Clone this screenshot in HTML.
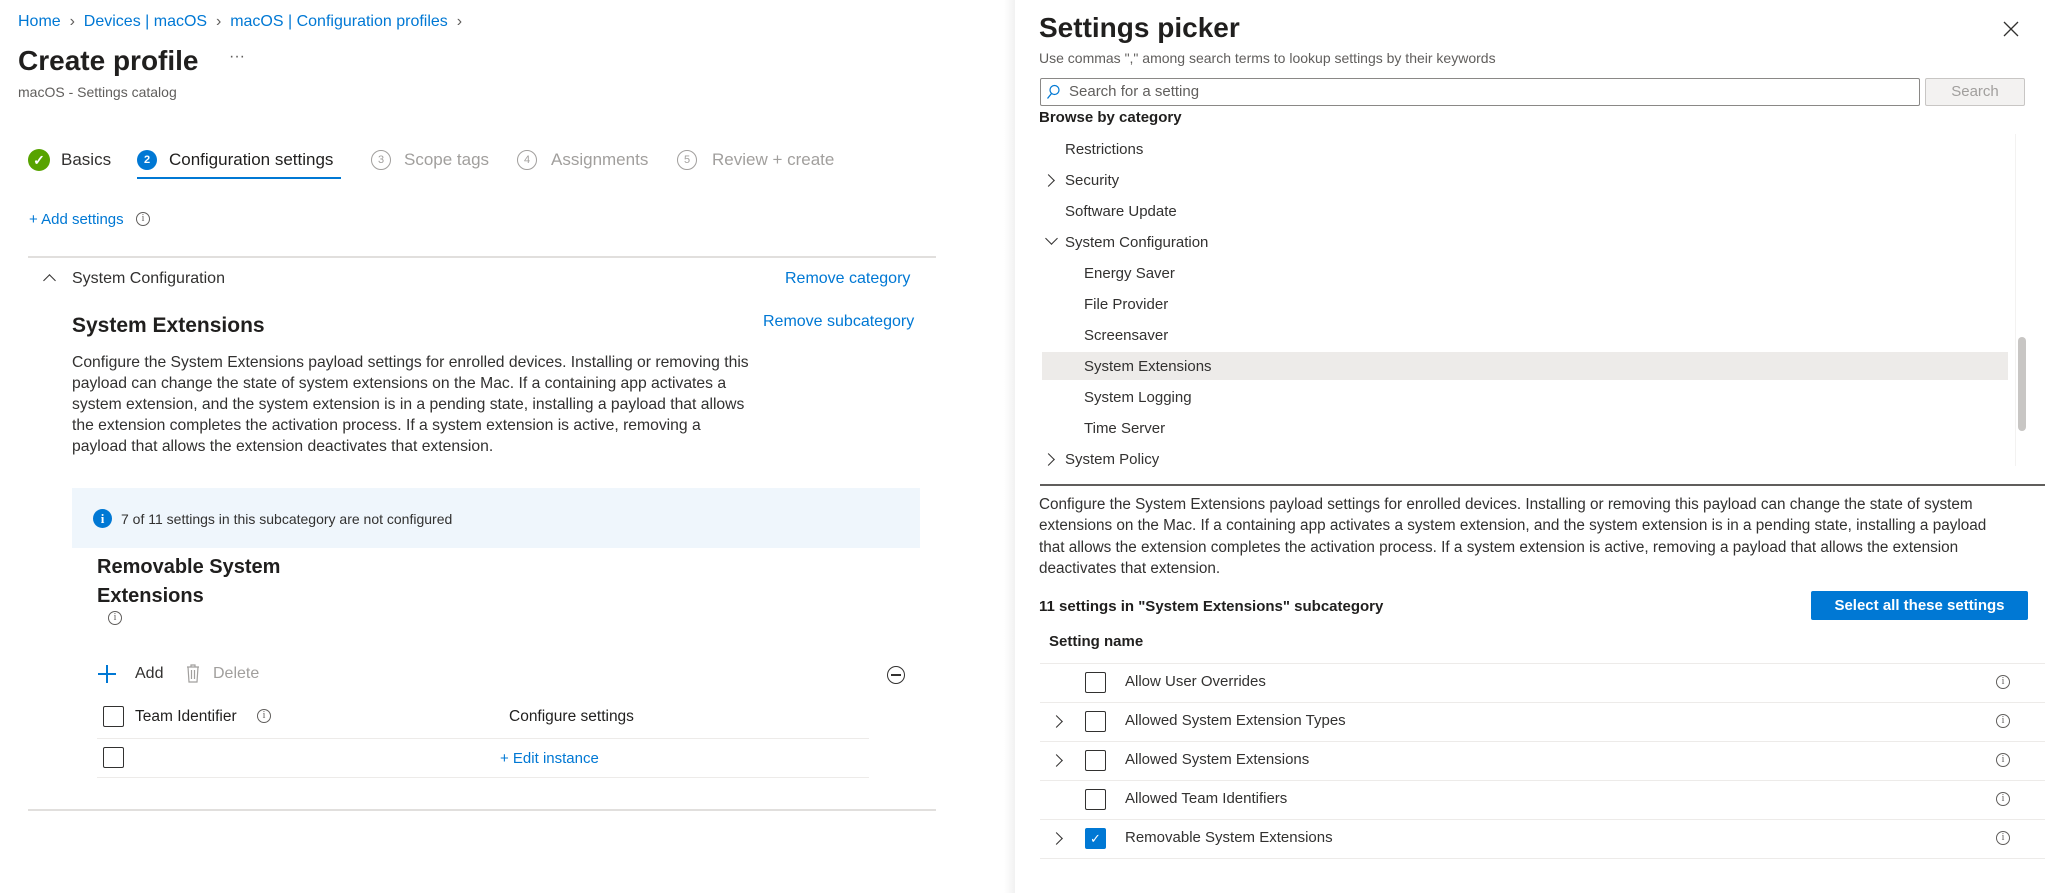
<!DOCTYPE html>
<html><head><meta charset="utf-8"><style>
*{margin:0;padding:0;box-sizing:border-box}
body{width:2048px;height:893px;background:#fff;font-family:"Liberation Sans",sans-serif;color:#323130;position:relative;overflow:hidden}
.a{position:absolute;white-space:nowrap}
.blue{color:#0078d4}
.gray{color:#a19f9d}
.cb{position:absolute;width:21px;height:21px;border:1.5px solid #323130;border-radius:2px;background:#fff}
.info{position:absolute;width:14px;height:14px;border:1px solid #605e5c;border-radius:50%;font-size:10px;line-height:12px;text-align:center;color:#605e5c;font-family:"Liberation Serif",serif}
.num{position:absolute;width:20px;height:20px;border:1px solid #a19f9d;border-radius:50%;font-size:11px;line-height:18px;text-align:center;color:#a19f9d}
.hl{position:absolute;height:1px;background:#edebe9}
.chev{position:absolute;width:9px;height:9px;border-right:1.3px solid #323130;border-top:1.3px solid #323130;transform:rotate(45deg)}
</style></head><body>

<!-- Left -->
<div class="a" style="left:18px;top:13px;font-size:16px"><span class="blue">Home</span><span style="color:#605e5c">&nbsp;&nbsp;›&nbsp;&nbsp;</span><span class="blue">Devices | macOS</span><span style="color:#605e5c">&nbsp;&nbsp;›&nbsp;&nbsp;</span><span class="blue">macOS | Configuration profiles</span><span style="color:#605e5c">&nbsp;&nbsp;›</span></div>
<div class="a" style="left:18px;top:45px;font-size:28px;font-weight:bold;color:#201f1e">Create profile</div>
<div class="a" style="left:229px;top:48px;font-size:16px;color:#605e5c">···</div>
<div class="a" style="left:18px;top:84px;font-size:14px;color:#605e5c">macOS - Settings catalog</div>

<div class="a" style="left:28px;top:149px;width:22px;height:22px;border-radius:50%;background:#57a300;color:#fff;font-size:14px;text-align:center;line-height:22px;font-weight:bold">✓</div>
<div class="a" style="left:61px;top:150px;font-size:17px">Basics</div>
<div class="a" style="left:137px;top:150px;width:20px;height:20px;border-radius:50%;background:#0078d4;color:#fff;font-size:11px;text-align:center;line-height:20px;font-weight:bold">2</div>
<div class="a" style="left:169px;top:150px;font-size:17px;color:#201f1e">Configuration settings</div>
<div class="a" style="left:137px;top:177px;width:204px;height:2px;background:#0078d4"></div>
<div class="num" style="left:371px;top:150px">3</div>
<div class="a gray" style="left:404px;top:150px;font-size:17px">Scope tags</div>
<div class="num" style="left:517px;top:150px">4</div>
<div class="a gray" style="left:551px;top:150px;font-size:17px">Assignments</div>
<div class="num" style="left:677px;top:150px">5</div>
<div class="a gray" style="left:712px;top:150px;font-size:17px">Review + create</div>

<div class="a blue" style="left:29px;top:211px;font-size:15px">+ Add settings</div>
<div class="info" style="left:136px;top:212px">i</div>

<div class="a" style="left:28px;top:256px;width:908px;height:2px;background:#e1dfdd"></div>
<div class="a" style="left:45px;top:276px;width:9px;height:9px;border-left:1.3px solid #323130;border-top:1.3px solid #323130;transform:rotate(45deg)"></div>
<div class="a" style="left:72px;top:270px;font-size:16px">System Configuration</div>
<div class="a blue" style="left:785px;top:270px;font-size:16px">Remove category</div>
<div class="a" style="left:72px;top:314px;font-size:21px;font-weight:bold;color:#201f1e">System Extensions</div>
<div class="a blue" style="left:763px;top:313px;font-size:16px">Remove subcategory</div>
<div class="a" style="left:72px;top:352px;font-size:15.7px;line-height:21px">Configure the System Extensions payload settings for enrolled devices. Installing or removing this<br>payload can change the state of system extensions on the Mac. If a containing app activates a<br>system extension, and the system extension is in a pending state, installing a payload that allows<br>the extension completes the activation process. If a system extension is active, removing a<br>payload that allows the extension deactivates that extension.</div>

<div class="a" style="left:72px;top:488px;width:848px;height:60px;background:#eff6fc"></div>
<div class="a" style="left:93px;top:509px;width:19px;height:19px;border-radius:50%;background:#0078d4;color:#fff;font-size:13px;font-weight:bold;text-align:center;line-height:19px;font-family:'Liberation Serif',serif">i</div>
<div class="a" style="left:121px;top:511px;font-size:14px">7 of 11 settings in this subcategory are not configured</div>

<div class="a" style="left:97px;top:553px;font-size:20px;font-weight:bold;line-height:29px;color:#201f1e">Removable System<br>Extensions</div>
<div class="info" style="left:108px;top:611px">i</div>

<div class="a" style="left:106px;top:665px;width:2px;height:18px;background:#0078d4"></div>
<div class="a" style="left:98px;top:673px;width:18px;height:2px;background:#0078d4"></div>
<div class="a" style="left:135px;top:665px;font-size:16px">Add</div>
<svg class="a" style="left:185px;top:663px" width="16" height="20" viewBox="0 0 16 20"><path d="M2 4h12M6 4V2h4v2M3 4l1 15h8l1-15M6.5 7v9M9.5 7v9" fill="none" stroke="#a19f9d" stroke-width="1.2"/></svg>
<div class="a gray" style="left:213px;top:665px;font-size:16px">Delete</div>
<div class="a" style="left:887px;top:666px;width:18px;height:18px;border:1.3px solid #323130;border-radius:50%"></div>
<div class="a" style="left:891px;top:674px;width:10px;height:1.5px;background:#323130"></div>

<div class="cb" style="left:103px;top:706px"></div>
<div class="a" style="left:135px;top:708px;font-size:15.5px;color:#201f1e">Team Identifier</div>
<div class="info" style="left:257px;top:709px">i</div>
<div class="a" style="left:509px;top:708px;font-size:15.5px;color:#201f1e">Configure settings</div>
<div class="hl" style="left:97px;top:738px;width:772px"></div>
<div class="cb" style="left:103px;top:747px"></div>
<div class="a blue" style="left:500px;top:750px;font-size:15px">+ Edit instance</div>
<div class="hl" style="left:97px;top:777px;width:772px"></div>
<div class="a" style="left:28px;top:809px;width:908px;height:2px;background:#e1dfdd"></div>

<!-- Right panel -->
<div class="a" style="left:1004px;top:0;width:12px;height:893px;background:linear-gradient(to right,rgba(0,0,0,0),rgba(0,0,0,0.06))"></div>
<div class="a" style="left:1015px;top:0;width:1033px;height:893px;background:#fff"></div>
<div class="a" style="left:1039px;top:12px;font-size:28px;font-weight:bold;color:#201f1e">Settings picker</div>
<svg class="a" style="left:2003px;top:21px" width="16" height="16"><path d="M1 1L15 15M15 1L1 15" stroke="#323130" stroke-width="1.3"/></svg>
<div class="a" style="left:1039px;top:50px;font-size:14px;color:#605e5c">Use commas "," among search terms to lookup settings by their keywords</div>
<div class="a" style="left:1040px;top:78px;width:880px;height:28px;border:1px solid #8a8886;border-radius:2px"></div>
<svg class="a" style="left:1046px;top:84px" width="14" height="16"><circle cx="8.5" cy="6" r="4.5" fill="none" stroke="#0078d4" stroke-width="1.2"/><path d="M5.5 9.5L1.5 14.5" stroke="#0078d4" stroke-width="1.3"/></svg>
<div class="a" style="left:1069px;top:83px;font-size:15px;color:#605e5c">Search for a setting</div>
<div class="a" style="left:1925px;top:78px;width:100px;height:28px;border:1px solid #c8c6c4;background:#f3f2f1;border-radius:2px;font-size:15px;color:#a19f9d;text-align:center;line-height:26px">Search</div>
<div class="a" style="left:1039px;top:109px;font-size:15px;font-weight:bold;color:#201f1e">Browse by category</div>

<div class="a" style="left:1042px;top:352px;width:966px;height:28px;background:#edebe9"></div>
<div class="a" style="left:1065px;top:141px;font-size:15px">Restrictions</div>
<div class="chev" style="left:1044px;top:176px"></div>
<div class="a" style="left:1065px;top:172px;font-size:15px">Security</div>
<div class="a" style="left:1065px;top:203px;font-size:15px">Software Update</div>
<div class="a" style="left:1047px;top:234px;width:9px;height:9px;border-right:1.3px solid #323130;border-bottom:1.3px solid #323130;transform:rotate(45deg)"></div>
<div class="a" style="left:1065px;top:234px;font-size:15px">System Configuration</div>
<div class="a" style="left:1084px;top:265px;font-size:15px">Energy Saver</div>
<div class="a" style="left:1084px;top:296px;font-size:15px">File Provider</div>
<div class="a" style="left:1084px;top:327px;font-size:15px">Screensaver</div>
<div class="a" style="left:1084px;top:358px;font-size:15px">System Extensions</div>
<div class="a" style="left:1084px;top:389px;font-size:15px">System Logging</div>
<div class="a" style="left:1084px;top:420px;font-size:15px">Time Server</div>
<div class="chev" style="left:1044px;top:455px"></div>
<div class="a" style="left:1065px;top:451px;font-size:15px;height:16px;overflow:hidden">System Policy</div>
<div class="a" style="left:2015px;top:134px;width:1px;height:332px;background:#f3f2f1"></div>
<div class="a" style="left:2018px;top:337px;width:8px;height:94px;border-radius:4px;background:#c8c6c4"></div>

<div class="a" style="left:1040px;top:484px;width:1005px;height:2px;background:#605e5c"></div>
<div class="a" style="left:1039px;top:494px;font-size:15.3px;line-height:21.3px">Configure the System Extensions payload settings for enrolled devices. Installing or removing this payload can change the state of system<br>extensions on the Mac. If a containing app activates a system extension, and the system extension is in a pending state, installing a payload<br>that allows the extension completes the activation process. If a system extension is active, removing a payload that allows the extension<br>deactivates that extension.</div>
<div class="a" style="left:1039px;top:598px;font-size:15px;font-weight:bold;color:#201f1e">11 settings in "System Extensions" subcategory</div>
<div class="a" style="left:1811px;top:591px;width:217px;height:29px;background:#0078d4;color:#fff;font-size:15px;font-weight:bold;text-align:center;line-height:29px;border-radius:2px">Select all these settings</div>
<div class="a" style="left:1049px;top:633px;font-size:15px;font-weight:bold;color:#201f1e">Setting name</div>
<div class="hl" style="left:1040px;top:663px;width:1005px"></div>

<div class="cb" style="left:1085px;top:672px"></div>
<div class="a" style="left:1125px;top:673px;font-size:15px">Allow User Overrides</div>
<div class="info" style="left:1996px;top:675px">i</div>
<div class="hl" style="left:1040px;top:702px;width:1005px"></div>

<div class="chev" style="left:1052px;top:717px"></div>
<div class="cb" style="left:1085px;top:711px"></div>
<div class="a" style="left:1125px;top:712px;font-size:15px">Allowed System Extension Types</div>
<div class="info" style="left:1996px;top:714px">i</div>
<div class="hl" style="left:1040px;top:741px;width:1005px"></div>

<div class="chev" style="left:1052px;top:756px"></div>
<div class="cb" style="left:1085px;top:750px"></div>
<div class="a" style="left:1125px;top:751px;font-size:15px">Allowed System Extensions</div>
<div class="info" style="left:1996px;top:753px">i</div>
<div class="hl" style="left:1040px;top:780px;width:1005px"></div>

<div class="cb" style="left:1085px;top:789px"></div>
<div class="a" style="left:1125px;top:790px;font-size:15px">Allowed Team Identifiers</div>
<div class="info" style="left:1996px;top:792px">i</div>
<div class="hl" style="left:1040px;top:819px;width:1005px"></div>

<div class="chev" style="left:1052px;top:834px"></div>
<div class="cb" style="left:1085px;top:828px;background:#0078d4;border-color:#0078d4;color:#fff;font-size:13px;text-align:center;line-height:19px">✓</div>
<div class="a" style="left:1125px;top:829px;font-size:15px">Removable System Extensions</div>
<div class="info" style="left:1996px;top:831px">i</div>
<div class="hl" style="left:1040px;top:858px;width:1005px"></div>
</body></html>
